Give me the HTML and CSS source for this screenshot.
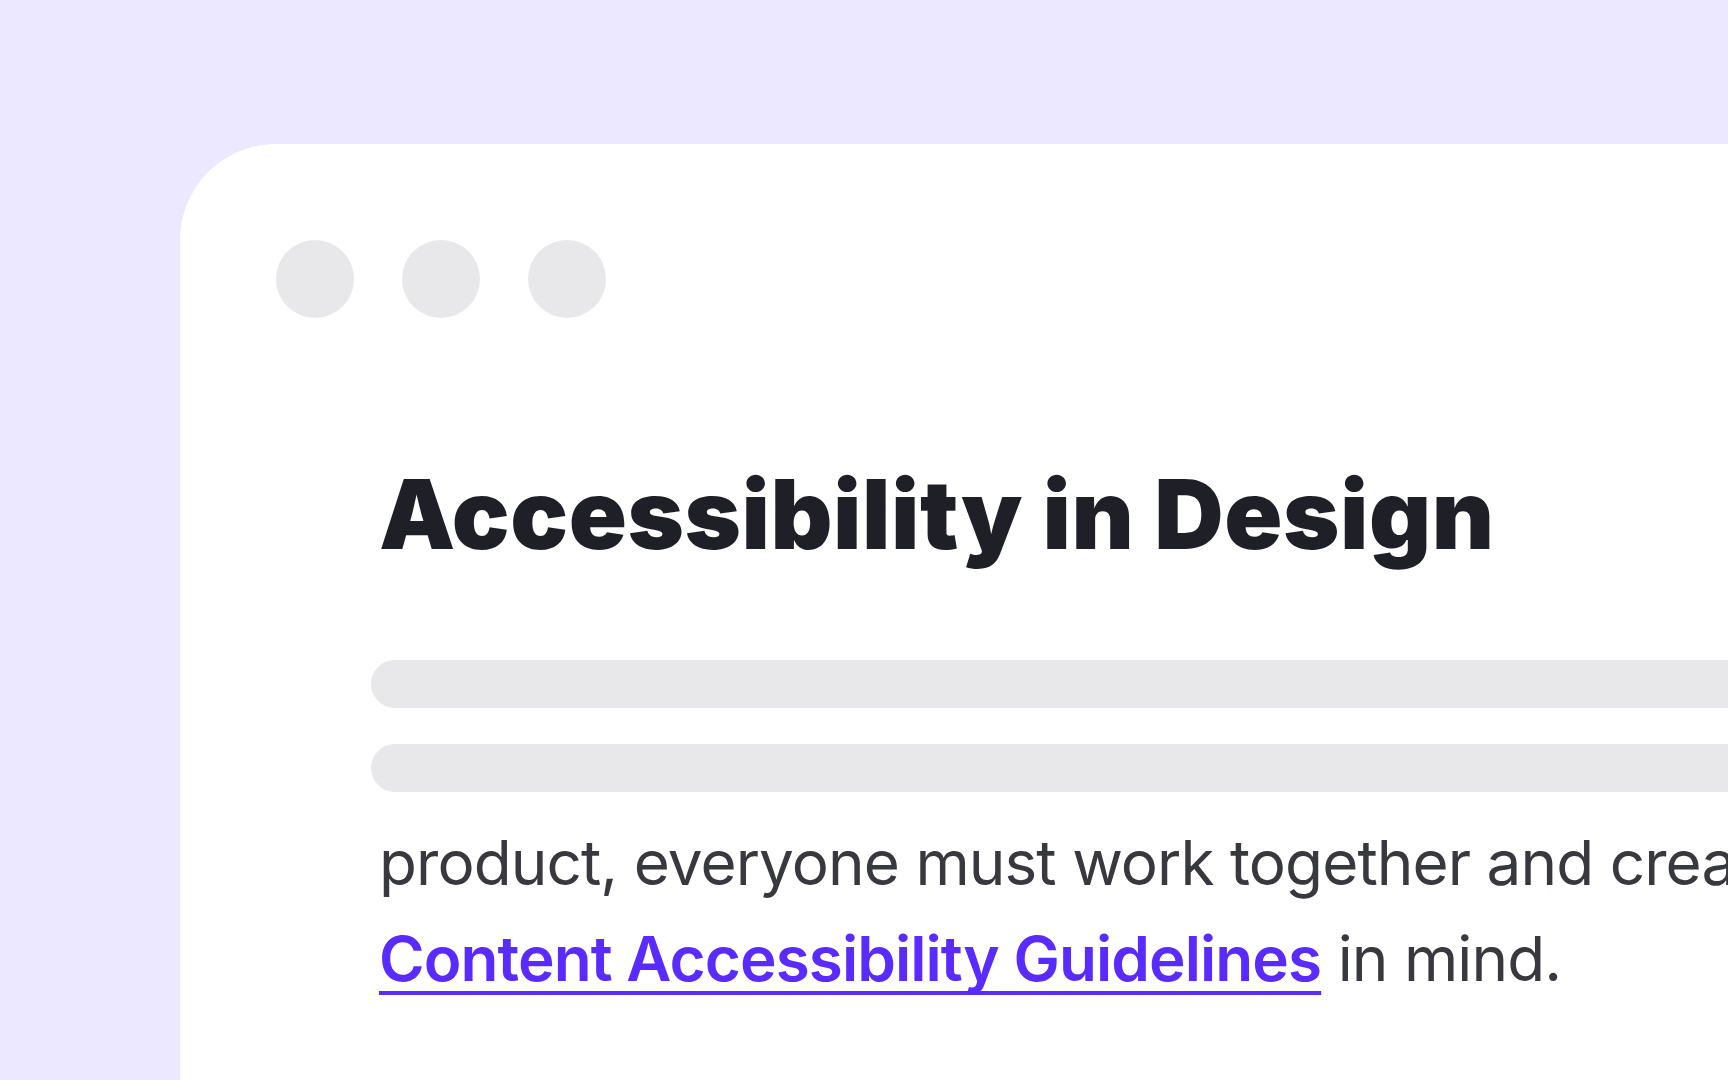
FILE: index.html
```html
<!DOCTYPE html>
<html lang="en">
<head>
    <meta charset="UTF-8">
    <meta name="viewport" content="width=device-width, initial-scale=1.0">
    <title>Accessibility in Design</title>
    <link rel="stylesheet" href="styles.css">
</head>
<body>
    <div class="stage">
        <!-- Browser window card -->
        <section class="window">
            <div class="window-dots">
                <span class="dot"></span>
                <span class="dot"></span>
                <span class="dot"></span>
            </div>

            <article class="article">
                <h1>Accessibility in Design</h1>

                <!-- Placeholder lines -->
                <div class="skeleton">
                    <div class="skeleton-line"></div>
                    <div class="skeleton-line"></div>
                </div>

                <p class="article-text">
                    product, everyone must work together and create it with the Web<br>
                    <a href="#">Content Accessibility Guidelines</a> in mind.
                </p>
            </article>
        </section>
    </div>
</body>
</html>
```

FILE: styles.css
```css
/* Page background */
body {
    margin: 0;
    background: #ece8ff;
    font-family: Inter, "Noto Sans", sans-serif;
    overflow: hidden;
    height: 100vh;
}

.stage {
    padding: 144px 0 0 180px;
}

/* Browser window */
.window {
    width: 1800px;
    min-height: 1000px;
    background: #fff;
    border-top-left-radius: 96px;
    padding: 96px;
}

.window-dots {
    display: flex;
    gap: 48px;
}

.dot {
    width: 78px;
    height: 78px;
    border-radius: 50%;
    background: #e8e8ea;
}

/* Article content */
.article {
    padding: 138px 0 0 103px;
}

h1 {
    margin: 0;
    font-size: 96px;
    line-height: 116px;
    font-weight: 900;
    letter-spacing: 0.006em;
    color: #1f1f28;
    white-space: nowrap;
}

.skeleton {
    display: flex;
    flex-direction: column;
    gap: 36px;
    margin: 88px 0 0 -8px;
}

.skeleton-line {
    height: 48px;
    border-radius: 24px;
    background: #e8e8ea;
}

.article-text {
    margin: 23px 0 0;
    font-size: 62px;
    line-height: 96px;
    letter-spacing: -0.015em;
    color: #38383f;
    white-space: nowrap;
}

.article-text a {
    color: #5a2bff;
    font-weight: 600;
    text-decoration: underline;
    text-decoration-thickness: 4px;
    text-underline-offset: 10px;
    text-decoration-skip-ink: none;
}
```
